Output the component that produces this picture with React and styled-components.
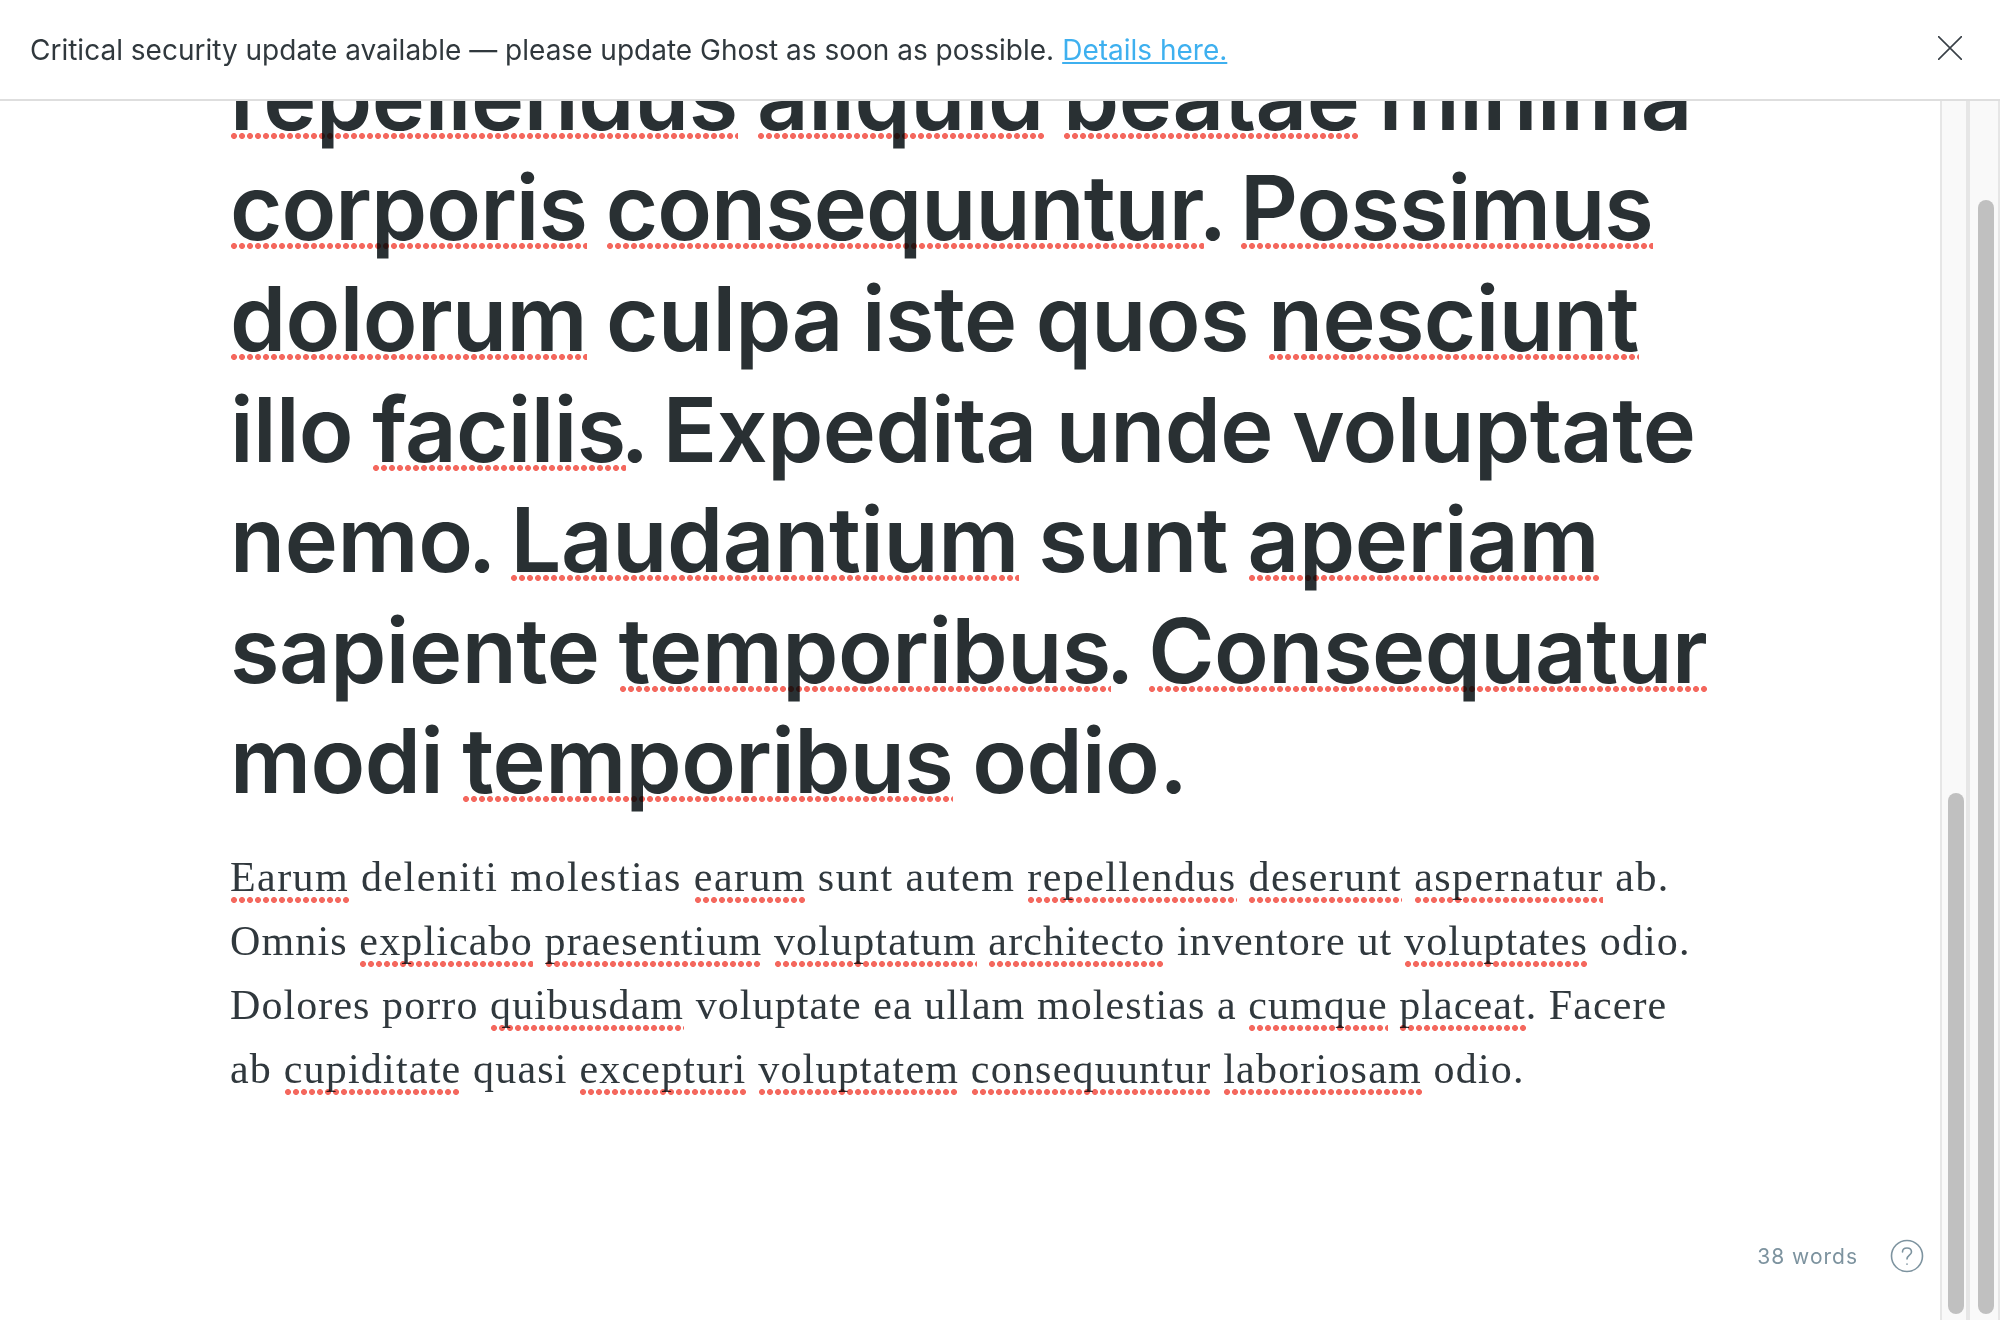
import React from "react";
import styled, { createGlobalStyle } from "styled-components";

const GlobalStyle = createGlobalStyle`
  html, body { margin: 0; padding: 0; background: #fff; overflow: hidden; }
`;

const Page = styled.div`
  width: 2000px;
  height: 1320px;
  display: flex;
  flex-direction: column;
  overflow: hidden;
`;

const Banner = styled.div`
  flex: none;
  height: 99px;
  display: flex;
  align-items: center;
  justify-content: space-between;
  padding: 0 38px 0 30px;
  border-bottom: 2px solid #dedede;
  font-family: Inter, "Liberation Sans", sans-serif;
  font-size: 28px;
  color: #30383d;
`;

const BannerLink = styled.a`
  color: #3eb0ef;
  text-decoration: underline;
  margin-left: 8px;
`;

const CloseButton = styled.div`
  display: flex;
  width: 24px;
  height: 24px;
  margin-bottom: 3px;
`;

const Body = styled.div`
  flex: 1;
  min-height: 0;
  display: flex;
`;

const Editor = styled.main`
  flex: 1;
  min-width: 0;
  position: relative;
  overflow: hidden;
  display: flex;
  flex-direction: column;
  justify-content: flex-end;
  padding: 0 0 219px 230px;
`;

const Title = styled.h1`
  margin: 0 0 28px;
  font-family: Inter, "Liberation Sans", sans-serif;
  font-size: 90px;
  font-weight: 600;
  line-height: 110.6px;
  letter-spacing: -0.6px;
  word-spacing: -3px;
  color: #293033;
`;

const Stop = styled.span`
  margin: 0 -5px;
`;

const Paragraph = styled.p`
  margin: 0;
  font-family: "Liberation Serif", serif;
  font-size: 42px;
  line-height: 64px;
  color: #30383d;
`;

const Line = styled.span`
  display: block;
  white-space: nowrap;
  letter-spacing: ${(p) => p.$spacing || "inherit"};
`;

const Spell = styled.span`
  position: relative;
  &::after {
    content: "";
    position: absolute;
    left: 0;
    right: 0;
    bottom: ${(p) => p.$bottom}px;
    height: 6px;
    background: radial-gradient(circle at 4px 3px, #f4685e 2.7px, transparent 3.2px) 0 0 / 8px 6px repeat-x;
    mix-blend-mode: multiply;
  }
`;

const WordCount = styled.div`
  position: absolute;
  right: 16px;
  bottom: 47px;
  display: flex;
  align-items: center;
  gap: 32px;
  font-family: Inter, "Liberation Sans", sans-serif;
  font-size: 21px;
  letter-spacing: 1px;
  color: #7d939f;
`;

const Track = styled.div`
  flex: none;
  width: ${(p) => p.$width}px;
  background: #f9f9f9;
  border-left: ${(p) => p.$border}px solid #e6e6e6;
  border-right: ${(p) => p.$right}px solid #e6e6e6;
  box-sizing: border-box;
  padding: ${(p) => p.$top}px 0 0 ${(p) => p.$inset}px;
`;

const Thumb = styled.div`
  width: 16px;
  height: ${(p) => p.$height}px;
  border-radius: 8px;
  background: #c0c0c0;
`;

const T = ({ children }) => <Spell $bottom={13}>{children}</Spell>;
const S = ({ children }) => <Spell $bottom={-3}>{children}</Spell>;

export default function App() {
  return (
    <Page>
      <GlobalStyle />
      <Banner>
        <span>
          Critical security update available — please update Ghost as soon as possible.
          <BannerLink href="#">Details here.</BannerLink>
        </span>
        <CloseButton>
          <svg width="24" height="24" viewBox="0 0 24 24" fill="none" stroke="#394047" strokeWidth="1.6">
            <path d="M0 0 L24 24 M24 0 L0 24" />
          </svg>
        </CloseButton>
      </Banner>
      <Body>
        <Editor>
          <Title>
            <Line $spacing="-0.43px"><T>repellendus</T> <T>aliquid</T> <T>beatae</T> minima</Line>
            <Line $spacing="-0.93px"><T>corporis</T> <T>consequuntur</T><Stop>.</Stop> <T>Possimus</T></Line>
            <Line><T>dolorum</T> culpa iste quos <T>nesciunt</T></Line>
            <Line><span>illo</span> <T>facilis</T><Stop>.</Stop> Expedita unde voluptate</Line>
            <Line $spacing="-0.35px">nemo<Stop>.</Stop> <T>Laudantium</T> sunt <T>aperiam</T></Line>
            <Line $spacing="-0.48px">sapiente <T>temporibus</T><Stop>.</Stop> <T>Consequatur</T></Line>
            <Line>modi <T>temporibus</T> odio.</Line>
          </Title>
          <Paragraph>
            <Line $spacing="1.43px"><S>Earum</S> deleniti molestias <S>earum</S> sunt autem <S>repellendus</S> <S>deserunt</S> <S>aspernatur</S> ab.</Line>
            <Line $spacing="1.14px">Omnis <S>explicabo</S> <S>praesentium</S> <S>voluptatum</S> <S>architecto</S> inventore ut <S>voluptates</S> odio.</Line>
            <Line $spacing="1.08px">Dolores porro <S>quibusdam</S> voluptate ea ullam molestias a <S>cumque</S> <S>placeat</S>. Facere</Line>
            <Line $spacing="1.2px">ab <S>cupiditate</S> quasi <S>excepturi</S> <S>voluptatem</S> <S>consequuntur</S> <S>laboriosam</S> odio.</Line>
          </Paragraph>
          <WordCount>
            <span>38 words</span>
            <svg width="34" height="34" viewBox="0 0 34 34" fill="none" stroke="#7d939f" strokeWidth="1.6" strokeLinecap="round">
              <circle cx="17" cy="17" r="15.5" />
              <path d="M12.5 13 C12.5 10 15 9 17 9 C20 9 21.5 11 21.5 13 C21.5 16 17 16.5 17 20" />
              <path d="M17 25 L17 25.2" />
            </svg>
          </WordCount>
        </Editor>
        <Track $width={30} $border={2} $right={4} $top={692} $inset={6}>
          <Thumb $height={521} />
        </Track>
        <Track $width={30} $border={0} $right={2} $top={99} $inset={8}>
          <Thumb $height={1114} />
        </Track>
      </Body>
    </Page>
  );
}
